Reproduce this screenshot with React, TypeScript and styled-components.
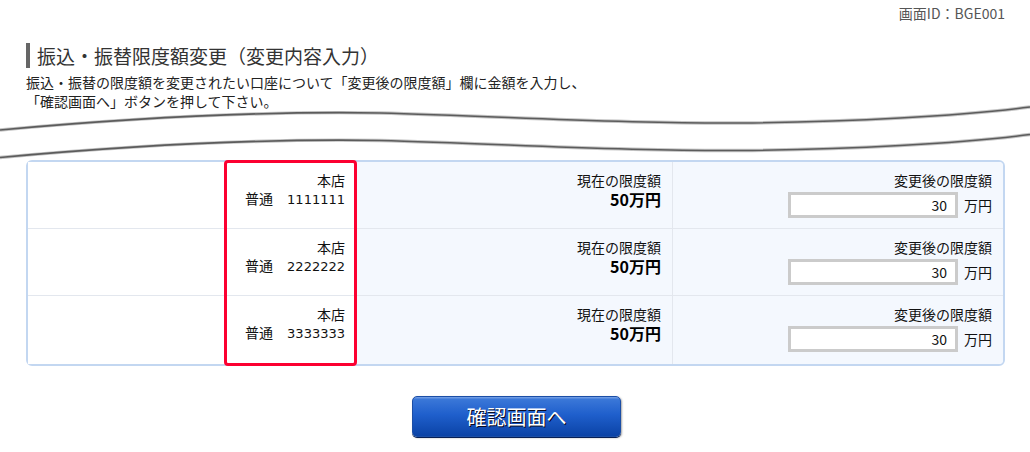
import React from 'react'
import styled, { createGlobalStyle } from 'styled-components'

interface Account {
  branch: string
  type: string
  number: string
  current: string
  next: string
}

const accounts: Account[] = [
  { branch: '本店', type: '普通', number: '1111111', current: '50万円', next: '30' },
  { branch: '本店', type: '普通', number: '2222222', current: '50万円', next: '30' },
  { branch: '本店', type: '普通', number: '3333333', current: '50万円', next: '30' }
]

const WAVE_1 = 'M0 28 C120 17, 260 9, 380 11 C500 14, 620 22, 740 21 C850 20, 960 14, 1030 5'
const WAVE_2 = 'M0 55.5 C120 44.5, 260 36.5, 380 38.5 C500 41.5, 620 49.5, 740 48.5 C850 47.5, 960 41.5, 1030 32.5'

const App: React.FC = () => {
  const last = accounts.length - 1

  return (
    <>
      <GlobalStyle />
      <Page>
        <Header>
          <ScreenId>画面ID：BGE001</ScreenId>
          <Title>振込・振替限度額変更（変更内容入力）</Title>
          <Lead>
            振込・振替の限度額を変更されたい口座について「変更後の限度額」欄に金額を入力し、
            <br />
            「確認画面へ」ボタンを押して下さい。
          </Lead>
        </Header>

        <Wave viewBox="0 0 1030 58" preserveAspectRatio="none">
          {[WAVE_1, WAVE_2].map((d) => (
            <g key={d}>
              <path d={d} fill="none" stroke="#c4c4c4" strokeWidth={3.4} />
              <path d={d} fill="none" stroke="#5c5c5c" strokeWidth={1.6} />
            </g>
          ))}
        </Wave>

        <Main>
          <LimitTable>
            {accounts.map((a, i) => {
              const row = i + 1
              const isLast = i === last
              return (
                <React.Fragment key={a.number}>
                  <Cell $row={row} $col={1} $last={isLast} />
                  <Cell $row={row} $col={2} $last={isLast} $pad={12}>
                    <Line>{a.branch}</Line>
                    <Line>
                      {a.type}　<AccountNo>{a.number}</AccountNo>
                    </Line>
                  </Cell>
                  <Cell $row={row} $col={3} $last={isLast} $tinted $divider>
                    <Line>現在の限度額</Line>
                    <Amount>{a.current}</Amount>
                  </Cell>
                  <Cell
                    $row={row}
                    $col={4}
                    $last={isLast}
                    $tinted
                    $corner={i === 0 ? 'top' : isLast ? 'bottom' : undefined}
                  >
                    <Line>変更後の限度額</Line>
                    <InputRow>
                      <AmountInput defaultValue={a.next} />
                      <Unit>万円</Unit>
                    </InputRow>
                  </Cell>
                </React.Fragment>
              )
            })}
            <Highlight />
          </LimitTable>

          <Actions>
            <PrimaryButton type="button">確認画面へ</PrimaryButton>
          </Actions>
        </Main>
      </Page>
    </>
  )
}

const GlobalStyle = createGlobalStyle`
  body {
    margin: 0;
    background: #fff;
    font-family: "Noto Sans CJK JP", "Noto Sans", sans-serif;
    color: #111;
  }
`

const Page = styled.div`
  width: 1030px;
  height: 452px;
  overflow: hidden;
`

const Header = styled.header`
  padding: 3px 25px 0 26px;
`

const ScreenId = styled.div`
  text-align: right;
  font-size: 14px;
  line-height: 20px;
  color: #555;
`

const Title = styled.h1`
  margin: 20px 0 0;
  height: 25px;
  padding-left: 7px;
  border-left: 4px solid #666;
  font-size: 19px;
  font-weight: normal;
  line-height: 25px;
  color: #333;
`

const Lead = styled.p`
  margin: 5px 0 0;
  font-size: 14px;
  line-height: 19px;
  color: #222;
`

const Wave = styled.svg`
  display: block;
  width: 1030px;
  height: 58px;
  margin-top: -9px;
`

const Main = styled.main`
  padding: 0 25px 0 26px;
`

const LimitTable = styled.div`
  display: grid;
  grid-template-columns: 196px 133px 1fr 330px;
  grid-template-rows: 67px 67px 68px;
  border: 2px solid #c3d7f1;
  border-radius: 6px;
  background: #fff;
`

const Cell = styled.div<{
  $row: number
  $col: number
  $last?: boolean
  $tinted?: boolean
  $divider?: boolean
  $pad?: number
  $corner?: 'top' | 'bottom'
}>`
  grid-row: ${(p) => p.$row};
  grid-column: ${(p) => p.$col};
  padding: 9px ${(p) => p.$pad ?? 11}px 0 0;
  text-align: right;
  background: ${(p) => (p.$tinted ? '#f4f8fe' : '#fff')};
  border-bottom: ${(p) => (p.$last ? 'none' : '1px solid #e3e7ee')};
  border-right: ${(p) => (p.$divider ? '1px solid #e3e7ee' : 'none')};
  border-top-right-radius: ${(p) => (p.$corner === 'top' ? '4px' : '0')};
  border-bottom-right-radius: ${(p) => (p.$corner === 'bottom' ? '4px' : '0')};
  font-size: 14px;
  line-height: 18px;
  color: #111;
`

const Line = styled.div``

const AccountNo = styled.span`
  font-family: "DejaVu Sans", "Noto Sans", sans-serif;
  font-size: 13px;
`

const Amount = styled.div`
  font-size: 16px;
  font-weight: bold;
  line-height: 20px;
  color: #000;
`

const InputRow = styled.div`
  display: flex;
  justify-content: flex-end;
  align-items: center;
  gap: 6px;
  margin-top: 3px;
`

const AmountInput = styled.input`
  box-sizing: border-box;
  width: 170px;
  height: 26px;
  padding: 0 8px 0 0;
  border: 3px solid #cbcbcb;
  background: #fff;
  text-align: right;
  font-family: "Noto Sans CJK JP", sans-serif;
  font-size: 14px;
  color: #111;
  outline: none;
`

const Unit = styled.span`
  font-size: 14px;
`

const Highlight = styled.div`
  grid-column: 2;
  grid-row: 1 / -1;
  margin: -2px 0;
  border: 3px solid #fc0031;
  border-radius: 4px;
  pointer-events: none;
  z-index: 1;
`

const Actions = styled.div`
  display: flex;
  justify-content: center;
  margin-top: 30px;
`

const PrimaryButton = styled.button`
  width: 209px;
  height: 41px;
  margin-left: 2px;
  border: 1px solid #1b4ea6;
  border-radius: 5px;
  background: linear-gradient(to bottom, #7aa3e6 0%, #3a77d8 6%, #1f5fcc 45%, #0b43a6 100%);
  box-shadow: 0 1px 0 #061f55, 1px 1px 2px rgba(0, 0, 0, 0.35);
  color: #fff;
  font-family: "Noto Sans CJK JP", sans-serif;
  font-size: 20px;
  line-height: 1;
  text-shadow: 1px 1px 0 #0a0a20;
  cursor: pointer;
`

export default App
